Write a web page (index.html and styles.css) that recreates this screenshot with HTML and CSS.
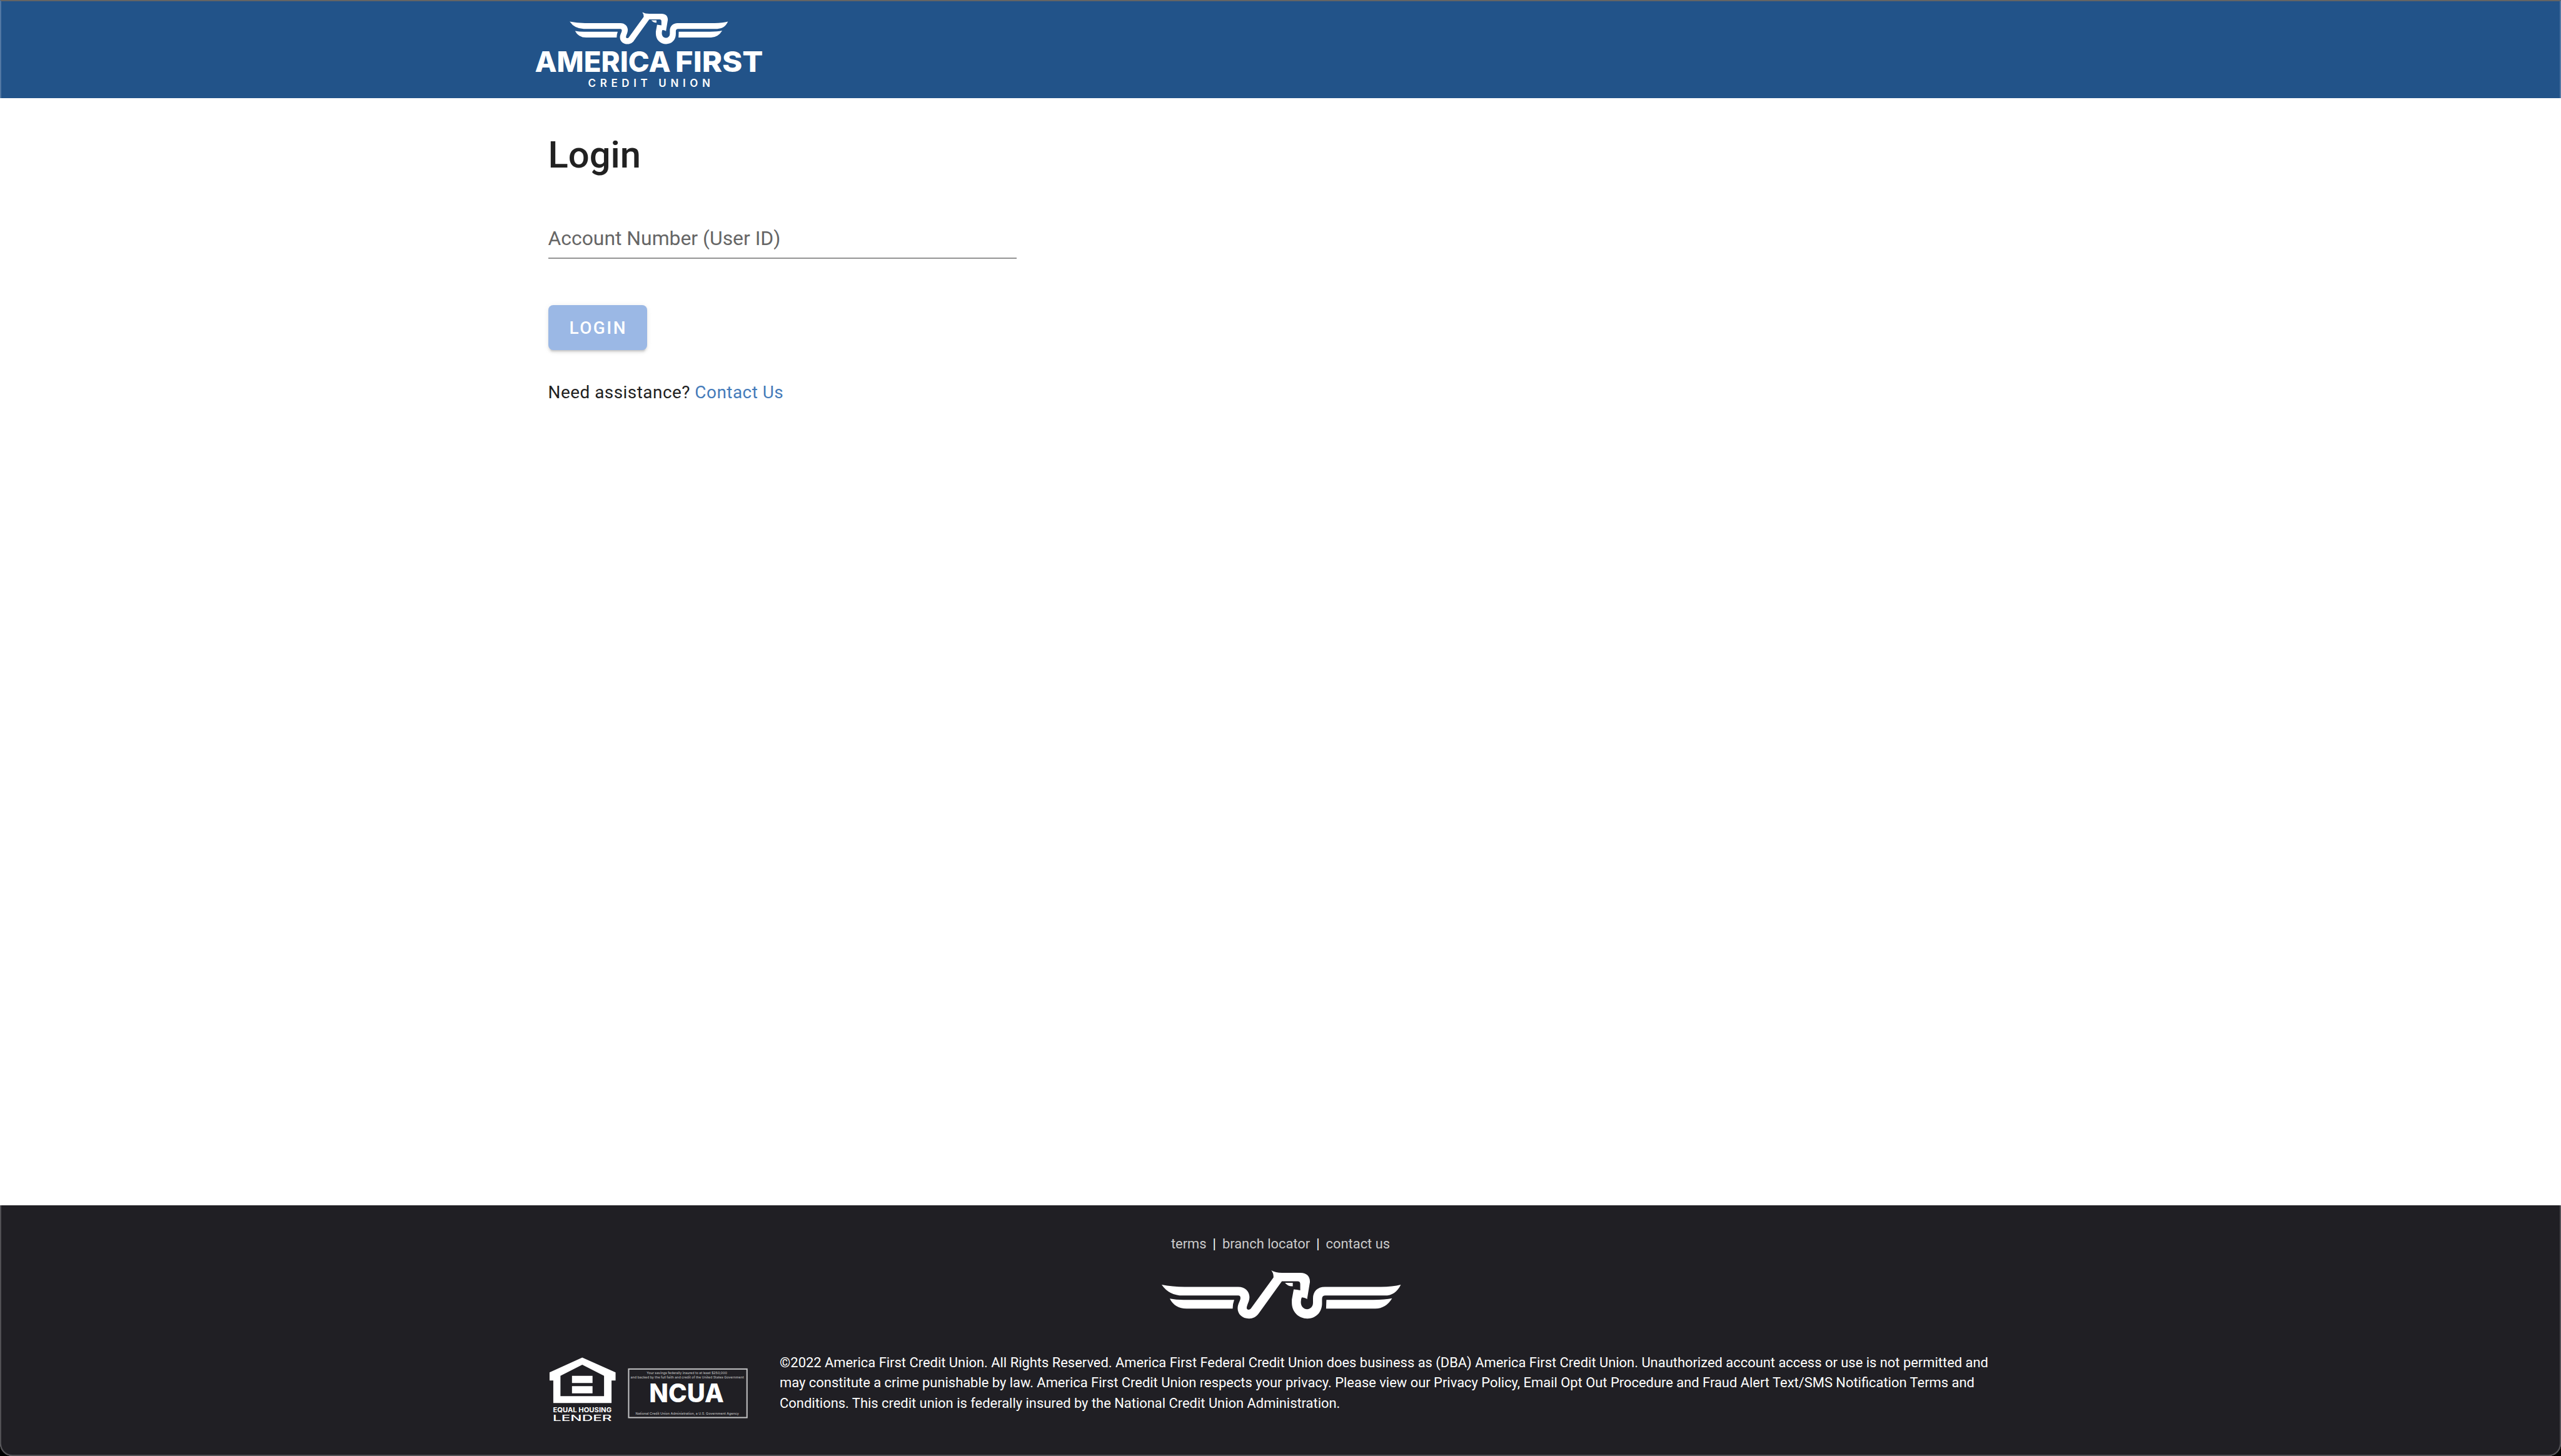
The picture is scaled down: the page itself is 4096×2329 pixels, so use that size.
FILE: index.html
```html
<!DOCTYPE html>
<html lang="en">
<head>
<meta charset="utf-8">
<title>Login | America First Credit Union</title>
<link rel="stylesheet" href="styles.css">
</head>
<body>
<svg class="defs" aria-hidden="true">
  <symbol id="eagle" viewBox="0 0 420 100">
    <path d="M15 23Q32 26.500 52 26.500H138C149 26.500 156 34 156 43C156 50 152 55 151.500 60.500C152 64 156 64 158.500 61L194.500 11.500Q195 5 191 0Q198 4 208 4H238C248 4 253.500 10 253 19L248.500 46.500Q247 44.500 240 43.500Q238.500 46 238.500 51C238.500 66 258 66 258 52V45C258 34 265 26.500 277 26.500H367Q386 26.500 399 23C393 35 385 40.500 373 40.500H278Q272.500 40.500 272.500 46V53C272.500 68 262 77.500 249 77.500C235 77.500 224 67 224 52V47L227 30.500Q232 31 237.500 32V22Q237.500 17.500 233 17.500H208L171 69C167 75 161 77.500 155.500 77.500C144 77.500 137 70 137 61C137 54 141.500 49 141.500 44.500Q141.500 40.500 138 40.500H49Q27 40.500 15 23Z"/>
    <path d="M28 45.500Q38 47.500 50 47.500H131.500Q129 54 129 61.500H55Q36 61.500 28 45.500Z"/>
    <path d="M279.500 47.500H355Q374 47.500 385 45Q375 61.500 358 61.500H279Z"/>
    <path d="M213 20H225.500V25.500Q218 26 213 20Z"/>
  </symbol>
</svg>
<div class="window">
  <header class="header">
    <svg class="brand" viewBox="840 0 400 158" role="img" aria-label="America First Credit Union">
      <use href="#eagle" x="904.500" y="19.500" width="278" height="66.200"/>
      <text class="brand-name" x="858.500" y="115.500" textLength="218" lengthAdjust="spacingAndGlyphs">AMERICA</text>
      <text class="brand-name" x="1084" y="115.500" textLength="141" lengthAdjust="spacingAndGlyphs">FIRST</text>
      <text class="brand-sub" x="944" y="140" textLength="196">CREDIT UNION</text>
    </svg>
  </header>
  <main class="main">
    <h1 class="title">Login</h1>
    <div class="field"><label class="field-label">Account Number (User ID)</label></div>
    <button class="button" type="button">LOGIN</button>
    <p class="help">Need assistance? <a class="help-link">Contact Us</a></p>
  </main>
  <footer class="footer">
    <nav class="links"><a class="link">terms</a><span class="bar">|</span><a class="link">branch locator</a><span class="bar">|</span><a class="link">contact us</a></nav>
    <svg class="footer-eagle" viewBox="0 0 420 100"><use href="#eagle" width="420" height="100"/></svg>
    <div class="legal">
      <svg class="badges" viewBox="870 2160 360 140">
        <path fill-rule="evenodd" d="M934.500 2179.500L988 2203.500V2216.500H981.500V2252.500H888V2216.500H882V2203.500ZM934.500 2191L899.500 2209V2241.500H969.500V2209Z"/>
        <path d="M918 2209H951V2220.500H918ZM918 2225.500H951V2237H918Z"/>
        <text class="eq" x="887.500" y="2267" textLength="94" lengthAdjust="spacingAndGlyphs">EQUAL HOUSING</text>
        <text class="lender" x="887" y="2281" textLength="95" lengthAdjust="spacingAndGlyphs">LENDER</text>
        <rect class="frame" x="1009" y="2198" width="190" height="78"/>
        <text class="fine" x="1038" y="2206" textLength="129" lengthAdjust="spacingAndGlyphs">Your savings federally insured to at least $250,000</text>
        <text class="fine" x="1012" y="2213" textLength="182" lengthAdjust="spacingAndGlyphs">and backed by the full faith and credit of the United States Government</text>
        <text class="ncua" x="1042" y="2251" textLength="120" lengthAdjust="spacingAndGlyphs">NCUA</text>
        <text class="fine" x="1020" y="2271.500" textLength="166" lengthAdjust="spacingAndGlyphs">National Credit Union Administration, a U.S. Government Agency</text>
      </svg>
      <p class="copy">©2022 America First Credit Union. All Rights Reserved. America First Federal Credit Union does business as (DBA) America First Credit Union. Unauthorized account access or use is not permitted and<br>may constitute a crime punishable by law. America First Credit Union respects your privacy. Please view our Privacy Policy, Email Opt Out Procedure and Fraud Alert Text/SMS Notification Terms and<br>Conditions. This credit union is federally insured by the National Credit Union Administration.</p>
    </div>
  </footer>
</div>
</body>
</html>
```
FILE: styles.css
```css
* { box-sizing: border-box; }
html { background: #000; overflow: hidden; }
body { margin: 0; font-family: Roboto, sans-serif; }
.defs { display: none; }
.window {
  zoom: 0.99611;
  width: 4112px;
  height: 2338px;
  display: flex;
  flex-direction: column;
  position: relative;
  overflow: hidden;
  background: #fff;
  border-radius: 0 0 20px 20px;
}
.window::after {
  content: "";
  position: absolute;
  inset: 0;
  border: 2.1px solid rgba(255, 255, 255, .22);
  border-top-color: #646464;
  border-radius: 0 0 20px 20px;
}
.header { height: 158px; padding-left: 840px; background: #225389; }
.brand { display: block; width: 400px; height: 158px; fill: #fff; }
.brand-name { font: 800 46px Inter, sans-serif; }
.brand-sub { font: 600 17px Inter, sans-serif; }
.main {
  flex: 1;
  display: flex;
  flex-direction: column;
  align-items: flex-start;
  padding: 54px 880px 0;
  color: #212121;
}
.title { margin: 0; font-size: 60px; line-height: 76px; font-weight: 500; }
.field { width: 752px; height: 64px; margin-top: 64px; border-bottom: 2.1px solid #949494; }
.field-label { font-size: 32px; line-height: 62px; color: #666; }
.button {
  width: 159px;
  height: 72px;
  margin-top: 74px;
  padding: 1px 0 0 2px;
  border: 0;
  border-radius: 8px;
  background: #9bb8e5;
  color: #fff;
  font: 500 28px/72px Roboto, sans-serif;
  letter-spacing: 2.5px;
  box-shadow: 0 6px 2px -4px rgba(0, 0, 0, .1), 0 4px 4px rgba(0, 0, 0, .08), 0 2px 10px rgba(0, 0, 0, .07);
}
.help { margin: 48px 0 0; font-size: 28px; line-height: 40px; letter-spacing: .5px; }
.help-link { color: #447bba; }
.footer { height: 402px; padding-top: 46px; background: #201f24; color: #fff; font-size: 22px; line-height: 33px; }
.links { display: flex; justify-content: center; gap: 10px; }
.link { color: #ccc; }
.footer-eagle { display: block; width: 420px; height: 100px; margin: 25px 0 0 1850px; fill: #fff; }
.legal { display: flex; margin-top: 20px; padding-left: 870px; }
.badges { width: 360px; height: 140px; fill: #fff; }
.copy { margin: 12px 0 0 22px; white-space: nowrap; }
.eq { font: 700 10.500px Inter, sans-serif; }
.lender { font: 500 13px Inter, sans-serif; }
.frame { fill: none; stroke: #c4c4c6; stroke-width: 2px; }
.fine { font: 500 5.500px Inter, sans-serif; fill: #bbb; }
.ncua { font: 800 41px Inter, sans-serif; }
```
